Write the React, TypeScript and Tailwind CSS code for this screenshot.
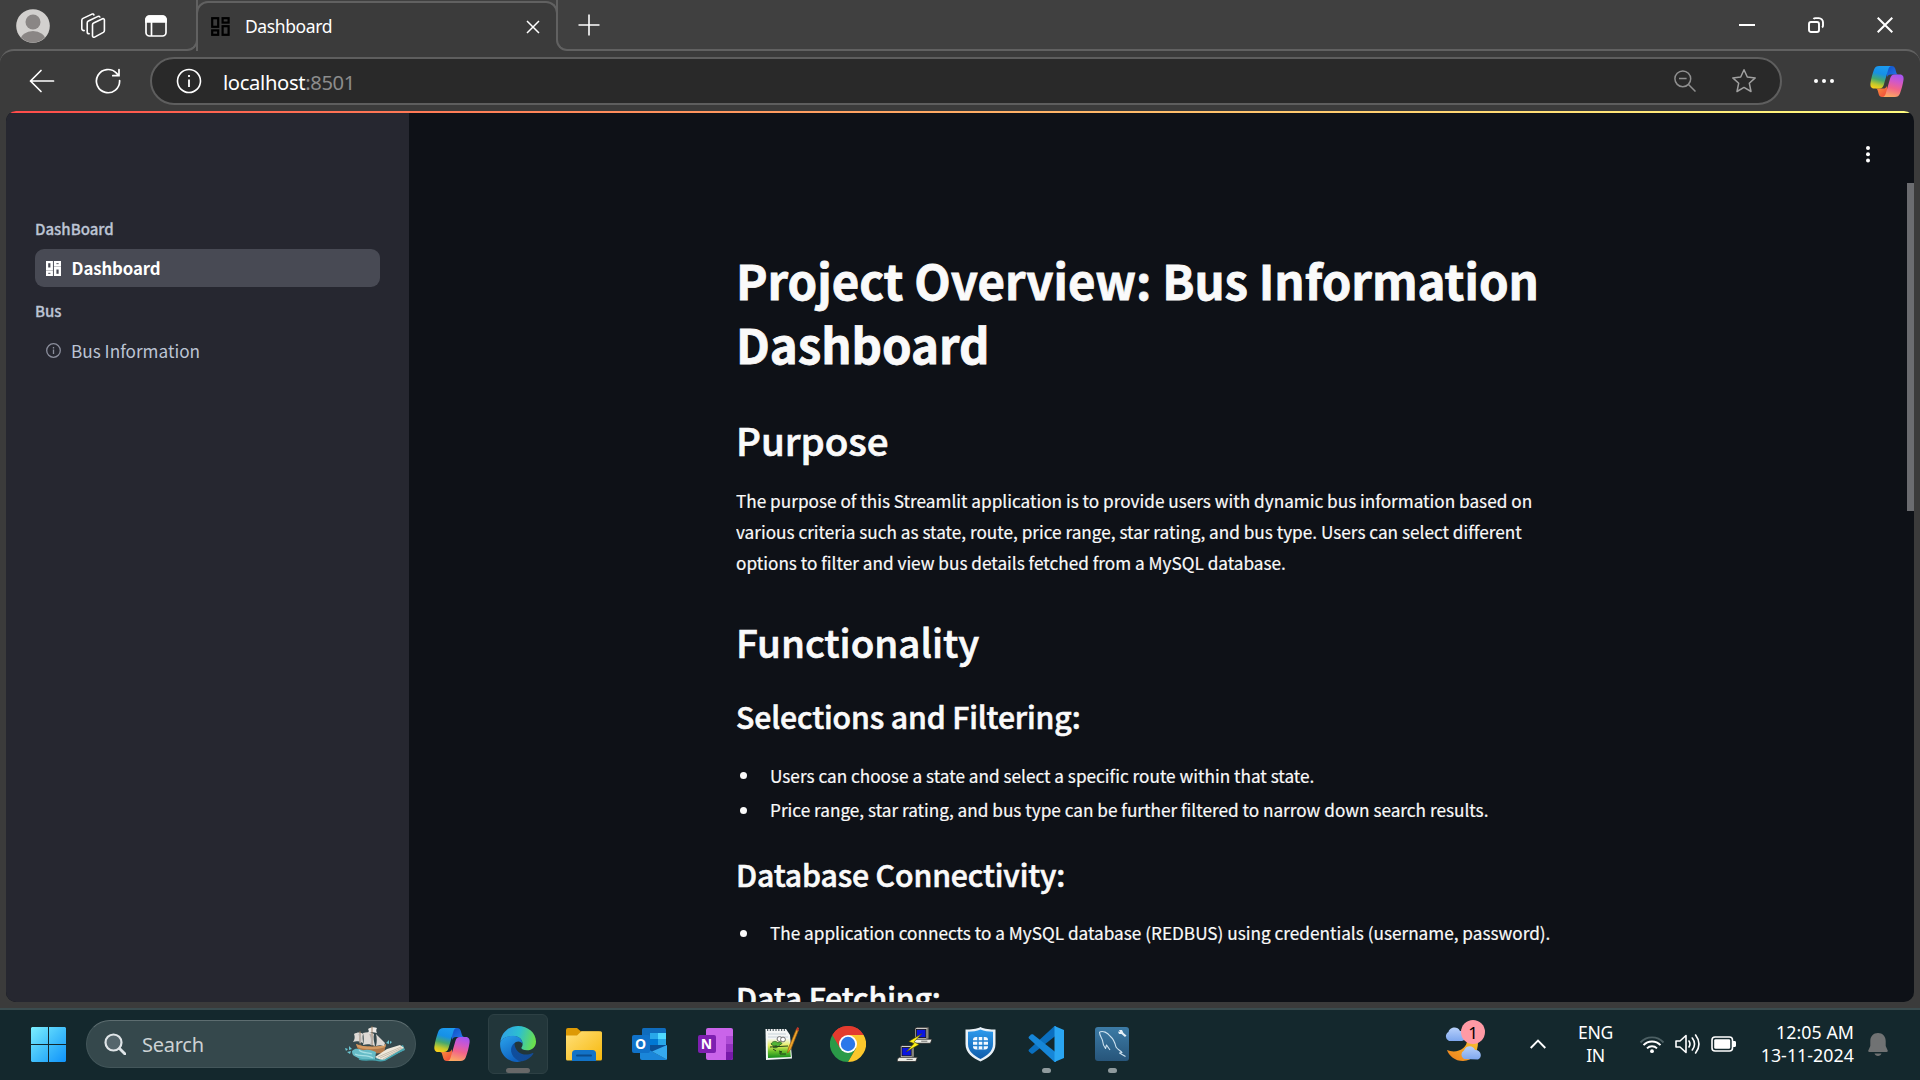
import type { ReactNode } from "react";

const UI = "font-['Noto_Sans',sans-serif]";
const PAGE = "font-['Noto_Sans_CJK_SC',sans-serif]";

/* ---------- shared icons ---------- */

function CopilotIcon({ id, className }: { id: string; className: string }) {
  return (
    <svg viewBox="0 0 36 33" className={className}>
      <defs>
        <linearGradient id={id + "a"} x1="0.6" y1="0" x2="0.35" y2="1">
          <stop offset="0" stopColor="#1c9bf0" />
          <stop offset="0.35" stopColor="#1690e6" />
          <stop offset="0.62" stopColor="#46a86e" />
          <stop offset="0.85" stopColor="#c3c92c" />
          <stop offset="1" stopColor="#f4cd1c" />
        </linearGradient>
        <linearGradient id={id + "b"} x1="0.6" y1="0" x2="0.35" y2="1">
          <stop offset="0" stopColor="#a855f0" />
          <stop offset="0.3" stopColor="#d158c8" />
          <stop offset="0.6" stopColor="#f2648a" />
          <stop offset="1" stopColor="#fbaa62" />
        </linearGradient>
        <linearGradient id={id + "c"} x1="0" y1="0" x2="1" y2="1">
          <stop offset="0" stopColor="#0f4fc4" />
          <stop offset="1" stopColor="#2a7cf0" />
        </linearGradient>
        <linearGradient id={id + "d"} x1="0" y1="0" x2="1" y2="1">
          <stop offset="0" stopColor="#fb9a3c" />
          <stop offset="1" stopColor="#f0463c" />
        </linearGradient>
      </defs>
      <path d="M18 0h5.200c2 0 3 1.200 3.600 3l1 3.600c.5 1.600 1 2.400 2.600 2.400H22c-2 0-3.400 1-4 3z" fill={`url(#${id}c)`} />
      <path d="M18 33h-5.200c-2 0-3-1.200-3.600-3l-1-3.600C7.700 24.800 7.200 24 5.600 24H14c2 0 3.400-1 4-3z" fill={`url(#${id}d)`} />
      <path d="M9.600 0H23c-2 0-3 1.400-3.600 3.400L14.600 20c-.8 2.600-2 4-4.600 4H4.200C1 24 0 21.400.4 18.400 1 14 2.600 8 4.200 3.800 5.200 1.200 6.800 0 9.600 0z" fill={`url(#${id}a)`} />
      <path d="M26.400 33H13c2 0 3-1.400 3.600-3.400L21.400 13c.8-2.600 2-4 4.600-4h5.800c3.200 0 4.200 2.600 3.800 5.600-.6 4.400-2.200 10.400-3.800 14.600-1 2.600-2.600 3.800-5.400 3.800z" fill={`url(#${id}b)`} />
    </svg>
  );
}

function GridIcon({ className, stroke }: { className: string; stroke: number }) {
  return (
    <svg viewBox="0 0 19 19" className={className} fill="none" stroke="currentColor" strokeWidth={stroke}>
      <rect x="1.200" y="1.200" width="6" height="8.600" />
      <rect x="1.200" y="13.400" width="6" height="4.400" />
      <rect x="11.600" y="1.200" width="6" height="4.400" />
      <rect x="11.600" y="9.200" width="6" height="8.600" />
    </svg>
  );
}

/* ---------- browser frame ---------- */

function TitleBar() {
  return (
    <div className="relative z-10 -mb-[2px] flex h-[51px] w-full items-start text-white">
      <div className="flex h-[51px] w-[186px] shrink-0 items-center pl-4">
        <svg viewBox="0 0 34 34" className="size-[34px]">
          <defs>
            <clipPath id="face"><circle cx="17" cy="17" r="16.500" /></clipPath>
          </defs>
          <circle cx="17" cy="17" r="16.800" fill="#d2d0ce" />
          <g clipPath="url(#face)" fill="#8a8685">
            <circle cx="17" cy="13" r="7.500" />
            <ellipse cx="17" cy="31" rx="12.500" ry="9" />
          </g>
        </svg>
        <svg viewBox="0 0 26 26" className="ml-[30px] size-[26px]" fill="none" stroke="#fff" strokeWidth="1.600" strokeLinejoin="round" strokeLinecap="round">
          <path d="M12.500 11.800c0-.8.4-1.500 1.100-1.800l9-4.200c.9-.4 1.800.2 1.800 1.100v10.600c0 .8-.4 1.500-1.100 1.900l-8.700 4.700c-1 .5-2.100-.1-2.100-1.200z" />
          <path d="M9.200 20.800c-1.300 0-2-.7-2-1.900V10c0-.9.400-1.600 1.200-2L18 3.400c.8-.3 1.500 0 1.800.6" />
          <path d="M4.200 17.600c-1.500 0-2.400-.7-2.400-2V7.400c0-.9.400-1.600 1.200-2l9-4.300c.8-.3 1.600 0 1.900.8" />
        </svg>
        <svg viewBox="0 0 22 22" className="ml-[39px] size-[22px]" fill="none" stroke="#fff" strokeWidth="1.700">
          <rect x="1" y="1" width="20" height="20" rx="3.500" />
          <path d="M1 7V4.500A3.500 3.500 0 0 1 4.500 1h13A3.500 3.500 0 0 1 21 4.500V7z" fill="#fff" />
          <path d="M6.500 7v14" />
        </svg>
      </div>
      <div className="h-[51px] w-3 shrink-0 bg-[#3b3b3b]">
        <div className="h-full w-full rounded-br-[11px] border-r-2 border-b-2 border-[#616161] bg-[#404040]" />
      </div>
      <div className="-mx-[2px] mt-[1px] flex h-[50px] w-[362px] shrink-0 items-center rounded-t-[12px] border-x-2 border-t-2 border-[#616161] bg-[#3b3b3b] pr-[16px] pb-[1px] pl-[13px]">
        <GridIcon stroke={2.2} className="size-[19px] text-black" />
        <span className={`-mt-[2px] ml-[15px] flex-1 text-[17.500px] leading-6 tracking-[-0.4px] ${UI}`}>Dashboard</span>
        <svg viewBox="0 0 14 14" className="size-[14px]" stroke="#fff" strokeWidth="1.500"><path d="M1 1l12 12M13 1L1 13" /></svg>
      </div>
      <div className="h-[51px] w-3 shrink-0 bg-[#3b3b3b]">
        <div className="h-full w-full rounded-bl-[11px] border-b-2 border-l-2 border-[#616161] bg-[#404040]" />
      </div>
      <svg viewBox="0 0 22 22" className="mt-[14px] ml-[9.500px] size-[22px]" stroke="#fff" strokeWidth="1.600"><path d="M11 .5v21M.5 11h21" /></svg>
      <div className="mt-[17px] mr-[27px] ml-auto flex items-center gap-[53px]">
        <svg viewBox="0 0 16 16" className="size-4" stroke="#fff" strokeWidth="2"><path d="M0 8h16" /></svg>
        <svg viewBox="0 0 16 16" className="size-4" fill="none" stroke="#fff" strokeWidth="1.900">
          <rect x="1" y="5" width="10" height="10" rx="2" />
          <path d="M5.500 2c.4-.6 1-.9 2-.9h3.300A4.200 4.200 0 0 1 15 5.300v3.200c0 1-.3 1.500-.9 2" />
        </svg>
        <svg viewBox="0 0 16 16" className="size-4" stroke="#fff" strokeWidth="2"><path d="M.7.7l14.600 14.600M15.300.7L.7 15.300" /></svg>
      </div>
    </div>
  );
}

function Toolbar() {
  return (
    <div className="flex h-[62px] w-full items-center rounded-t-[14px] border-t-2 border-[#616161] bg-[#3b3b3b]">
      <svg viewBox="0 0 26 24" className="ml-[29px] h-6 w-[26px]" fill="none" stroke="#fff" strokeWidth="1.700" strokeLinecap="round" strokeLinejoin="round">
        <path d="M24.500 12H1.500M12 1.500L1.500 12 12 22.500" />
      </svg>
      <svg viewBox="0 0 26 26" className="ml-[40px] size-[26px]" fill="none" stroke="#fff" strokeWidth="1.700" strokeLinecap="round">
        <path d="M24.600 12.500A11.600 11.600 0 1 1 21.500 5.200L23.600 7.500M24 1.500v6.200h-6.200" />
      </svg>
      <div className="ml-[29px] flex h-[48px] w-[1632px] items-center rounded-full border-2 border-[#5e5e5e] bg-[#292929] pl-[24px]">
        <svg viewBox="0 0 26 26" className="size-[26px]" fill="none" stroke="#fff" strokeWidth="1.600">
          <circle cx="13" cy="13" r="11.500" />
          <path d="M13 11.500v7.500M13 7v2" strokeWidth="1.800" />
        </svg>
        <span className={`mt-[1px] ml-[21px] flex-1 text-[20.200px] leading-7 tracking-[-0.35px] text-white ${UI}`}>
          localhost<span className="text-[#8c8c8c]">:8501</span>
        </span>
        <svg viewBox="0 0 22 22" className="size-[22px]" fill="none" stroke="#8f8f8f" strokeWidth="1.500">
          <circle cx="8.800" cy="8.800" r="7.900" />
          <path d="M14.500 14.500l7 7M5 8.500h7.600" />
        </svg>
        <svg viewBox="0 0 26 26" className="mr-[23px] ml-[35px] size-[26px]" fill="none" stroke="#a0a0a0" strokeWidth="1.500" strokeLinejoin="round">
          <path d="M13 1.800l3.300 7.200 7.900.9-5.900 5.300 1.700 8.300-7-4.100-7 4.100 1.700-8.300L1.800 9.900l7.900-.9z" />
        </svg>
      </div>
      <svg viewBox="0 0 20 4" className="ml-[32px] h-1 w-5" fill="#fff"><circle cx="2" cy="2" r="2" /><circle cx="10" cy="2" r="2" /><circle cx="18" cy="2" r="2" /></svg>
      <CopilotIcon id="cpt" className="ml-[36px] h-[31px] w-[34px]" />
    </div>
  );
}

/* ---------- app content ---------- */

const label = `h-6 text-[15px] font-medium leading-6 text-[#bcc4d4] [-webkit-text-stroke:0.3px_#bcc4d4] ${PAGE}`;

function Sidebar() {
  return (
    <aside className={`w-[403px] shrink-0 bg-[#262730] px-[29px] pt-[104px] ${PAGE}`}>
      <div className={label}>DashBoard</div>
      <div className="mt-[8px] flex h-[38px] items-center rounded-[9px] bg-[#484a54] pl-[11px] text-white">
        <GridIcon stroke={3.2} className="size-[15px]" />
        <span className="ml-[10.500px] text-[16.800px] leading-[38px] font-bold tracking-[-0.1px]">Dashboard</span>
      </div>
      <div className={`mt-[12px] ${label}`}>Bus</div>
      <div className="mt-[9px] flex h-[38px] items-center pl-[11px]">
        <svg viewBox="0 0 15 15" className="-mt-[1px] size-[15px]" fill="none" stroke="#8b8e9c" strokeWidth="1.300"><circle cx="7.500" cy="7.500" r="6.800" /><path d="M7.500 6.500V11M7.500 4v1.500" /></svg>
        <span className="ml-[10px] text-[17.200px] leading-[38px] text-[#bcc4d4]">Bus Information</span>
      </div>
    </aside>
  );
}

const H2 = ({ children }: { children: ReactNode }) => (
  <h2 className="text-[38.500px] leading-[52px] font-medium tracking-[-0.02px] [-webkit-text-stroke:0.7px_#fafafa]">{children}</h2>
);
const H3 = ({ children }: { children: ReactNode }) => (
  <h3 className="text-[30.200px] leading-[40px] font-medium tracking-[-0.13px] [-webkit-text-stroke:0.6px_#fafafa]">{children}</h3>
);
const BODY = "text-[17.200px] leading-[31px] tracking-[0.003px] [-webkit-text-stroke:0.2px_#fafafa]";
const Li = ({ children }: { children: ReactNode }) => (
  <li className="flex h-[31px] items-center whitespace-nowrap">
    <span className="mt-[1px] mr-[23.500px] ml-[3.500px] size-[7px] rounded-full bg-[#fafafa]" />
    <span className={BODY}>{children}</span>
  </li>
);

function Main() {
  return (
    <main className={`flex flex-1 text-[#fafafa] ${PAGE}`}>
      <article className="ml-[327px] h-[889px] w-[860px] overflow-hidden pt-[134.500px]">
        <h1 className="text-[47.400px] leading-[64px] font-bold tracking-[-0.04px] [-webkit-text-stroke:0.8px_#fafafa]">Project Overview: Bus Information<br />Dashboard</h1>
        <div className="mt-[37px]"><H2>Purpose</H2></div>
        <p className={`mt-[20.500px] whitespace-nowrap ${BODY}`}>
          The purpose of this Streamlit application is to provide users with dynamic bus information based on<br />
          various criteria such as state, route, price range, star rating, and bus type. Users can select different<br />
          options to filter and view bus details fetched from a MySQL database.
        </p>
        <div className="mt-[37px]"><H2>Functionality</H2></div>
        <div className="mt-[28.500px]"><H3>Selections and Filtering:</H3></div>
        <ul className="mt-[24px] flex flex-col gap-[3.500px]">
          <Li>Users can choose a state and select a specific route within that state.</Li>
          <Li>Price range, star rating, and bus type can be further filtered to narrow down search results.</Li>
        </ul>
        <div className="mt-[28.500px]"><H3>Database Connectivity:</H3></div>
        <ul className="mt-[23.500px]">
          <Li>The application connects to a MySQL database (REDBUS) using credentials (username, password).</Li>
        </ul>
        <div className="mt-[29px]"><H3>Data Fetching:</H3></div>
      </article>
      <div className="mr-0 ml-auto flex gap-[37px]">
        <svg viewBox="0 0 4 17" className="mt-[32.500px] h-[17px] w-1" fill="#fff"><circle cx="2" cy="2" r="2" /><circle cx="2" cy="8.300" r="2" /><circle cx="2" cy="14.600" r="2" /></svg>
        <div className="mt-[70px] h-[328px] w-[7px] bg-[#6b6c70]" />
      </div>
    </main>
  );
}

/* ---------- taskbar ---------- */

function Ship() {
  return (
    <svg viewBox="0 0 60 36" className="h-9 w-[60px]">
      <path d="M30 33l10-6 18-8 2 5-22 10z" fill="#4fa9b5" />
      <path d="M11 18c6 3 24 4 30 0l-2 9-22 1c-3-2-5-6-6-10z" fill="#b0794a" />
      <path d="M11 18c6 3 24 4 30 0l-.6 3c-8 3-22 3-28 0z" fill="#d39a62" />
      <path d="M9 8c3-2 7-2 9 0-1 3 0 6 0 9-4-2-7-2-10-1 2-3 2-5 1-8zM18 7c4-1 8-1 11 1-1 4 0 7 1 12-5-2-8-2-12-1 1-4 1-8 0-12zM31 8l9 9-1 3c-3-1-5-1-8 0 1-4 1-8 0-12z" fill="#dedad5" />
      <path d="M23 3c3-2 6-2 9-1-1 2-1 3 0 5-3-1-6-1-9 0 1-1 1-3 0-4z" fill="#efece8" />
      <path d="M15 5v14M27 0v20" stroke="#8e6a4a" strokeWidth=".8" />
      <path d="M14 8c2 3 2 6 1 9M25 8c2 4 2 8 1 11" stroke="#b3afab" strokeWidth="1.500" fill="none" />
      <path d="M7 25c5-5 9 0 13-1s8 1 11 2l-1 8c-6-1-12 1-17-2-3-2-6-2-6-7z" fill="#66bcc7" />
      <path d="M10 28c5 3 12 0 18 4M14 24c4 4 9 2 13 4" stroke="#a5dfe4" strokeWidth="1.200" fill="none" />
      <path d="M0 22l3 1-2 2zM4 20l3 3-3 1zM2 26l4-1-1 3zM41 17l3-3v4zM45 15l2 1-2 2z" fill="#6cc7d3" />
      <path d="M30 31l12-8 13-4 4 3-19 12c-4 0-7-1-10-3z" fill="#efe9dc" />
      <path d="M33 31l23-10M35 32l22-10M38 33l21-11" stroke="#b5ab9a" strokeWidth=".7" />
      <path d="M14 33c6 2 12 0 17 1 3 1 6 1 9 0l19-11" stroke="#46a3ae" strokeWidth="1.500" fill="none" />
    </svg>
  );
}

function EdgeIcon() {
  return (
    <svg viewBox="0 0 36 36" className="size-9">
      <defs>
        <linearGradient id="e1" x1="0" y1="0.300" x2="1" y2="0.500"><stop offset="0" stopColor="#2f9fe8" /><stop offset=".5" stopColor="#2dbfd0" /><stop offset="1" stopColor="#6be04a" /></linearGradient>
        <linearGradient id="e2" x1="0" y1="0" x2="0.500" y2="1"><stop offset="0" stopColor="#2aa3ec" /><stop offset="1" stopColor="#0f62c0" /></linearGradient>
        <linearGradient id="e3" x1="0" y1="0" x2="1" y2="1"><stop offset="0" stopColor="#0c4fa0" /><stop offset="1" stopColor="#144a94" /></linearGradient>
      </defs>
      <path d="M.3 16C1.500 6.500 9 0 18 0c10 0 18 7 18 15.500 0 5.500-4 8.800-9 8.800-4 0-6.200-1.400-5.500-2.800 3-4 0-11.500-8-11.500C7 10 2 12.500.3 16z" fill="url(#e1)" />
      <path d="M.2 16.500C1.800 12.300 7 9.800 13 9.800c6.500 0 9.800 4.400 9.500 8.400-1-3-6-4-8.500-.5-3.500 5-.5 13.500 8 16.800-1 .8-3 1.500-5 1.400C6.500 35.500-.8 27 .2 16.500z" fill="url(#e2)" />
      <path d="M14.500 17c-5.500 4-4.500 13 3.500 17.500 1.500.8 3 1 4.200.8 5-1.200 8.600-3.900 11-7.300.5-.8-.3-1.200-1-.8-3 1.400-7 2-10.700.5-4.500-1.800-7-6-7-10.700z" fill="url(#e3)" />
    </svg>
  );
}

function FolderIcon() {
  return (
    <svg viewBox="0 0 36 33" className="h-[33px] w-9">
      <defs><linearGradient id="fo" x1="0" y1="0" x2="1" y2="1"><stop offset="0" stopColor="#ffe07a" /><stop offset="1" stopColor="#f7b80c" /></linearGradient></defs>
      <path d="M0 2a2 2 0 0 1 2-2h9l4 3.500h19L18 9H0z" fill="#dd9a05" />
      <path d="M0 7.500h11l4.500-4.300H34.500A1.500 1.500 0 0 1 36 4.700V31a1.500 1.500 0 0 1-1.500 1.500h-33A1.500 1.500 0 0 1 0 31z" fill="url(#fo)" />
      <path d="M6 33v-7.500a3.500 3.500 0 0 1 3.500-3.500h17a3.500 3.500 0 0 1 3.500 3.500V33z" fill="#1273c8" />
      <path d="M11 27.500h14" stroke="#0a4c8c" strokeWidth="2" strokeLinecap="round" />
    </svg>
  );
}

function LetterTile({ letter, className }: { letter: string; className: string }) {
  return (
    <span className={`absolute top-[7px] left-0 flex size-[18px] items-center justify-center rounded-[2px] font-['Open_Sans',sans-serif] text-[14px] leading-none font-bold text-white ${className}`}>{letter}</span>
  );
}

function OutlookIcon() {
  return (
    <span className="relative block h-8 w-[35px]">
      <svg viewBox="0 0 35 32" className="h-8 w-[35px]">
        <rect x="10" width="24" height="22" rx="1.500" fill="#0f6cbd" />
        <rect x="18" y="5" width="8" height="6" fill="#28a8ea" /><rect x="26" y="5" width="8" height="6" fill="#50d9ff" />
        <rect x="18" y="11" width="8" height="6" fill="#0078d4" /><rect x="26" y="11" width="8" height="6" fill="#28a8ea" />
        <rect x="10" y="17" width="24" height="7" fill="#0a4f96" />
        <path d="M8 17l27 14.500a1.500 1.500 0 0 1-1 .5H10a2 2 0 0 1-2-2z" fill="#1a86d9" />
        <path d="M35 17v13.500c0 .5 0 .8-.3 1L20 23.500z" fill="#35a9ee" />
      </svg>
      <LetterTile letter="O" className="bg-[#1072c9]" />
    </span>
  );
}

function OneNoteIcon() {
  return (
    <span className="relative block h-8 w-[35px]">
      <svg viewBox="0 0 35 32" className="h-8 w-[35px]">
        <rect x="8" width="27" height="32" rx="2" fill="#ca64ea" />
        <path d="M28 8h7v8h-7z" fill="#ae4bd5" /><path d="M28 16h7v8h-7z" fill="#9332bf" /><path d="M28 24h7v6a2 2 0 0 1-2 2h-5z" fill="#7719aa" />
      </svg>
      <LetterTile letter="N" className="bg-[#7e1fb0]" />
    </span>
  );
}

function NotepadIcon() {
  return (
    <svg viewBox="0 0 34 34" className="size-[34px]">
      <defs><linearGradient id="np" x1="0" y1="0" x2="0" y2="1"><stop offset="0" stopColor="#f4f7e8" /><stop offset=".35" stopColor="#e6ef60" /><stop offset=".65" stopColor="#6cc22c" /><stop offset="1" stopColor="#128a1c" /></linearGradient></defs>
      <path d="M.5 2H21l4 6 2 23.500L1 33z" fill="#f4f6f6" />
      <path d="M2 3h18" stroke="#58646a" strokeWidth="2" strokeDasharray="1.200 1.600" />
      <path d="M3 7h18M3 10h20" stroke="#c6d2d8" strokeWidth="1" />
      <path d="M2.500 12h22l1.300 18L3 31z" fill="url(#np)" />
      <path d="M6 17c1.500-3 5-3.500 7-1l2-1.500 2 2-3 2c-1.500 2.500-4 3-6 1.500 2 0 3-.5 3.500-1.500-2.500.500-4.500 0-5.500-1.500z" fill="#52b436" stroke="#255c1e" strokeWidth=".8" />
      <path d="M5 20l18-1M8 22l3 2M14 24l3 1h-2v2h6" stroke="#24421c" strokeWidth="1" fill="none" />
      <circle cx="14.500" cy="12" r="2.400" fill="#fff" stroke="#555" strokeWidth=".8" /><circle cx="18" cy="12.500" r="2.400" fill="#fff" stroke="#555" strokeWidth=".8" />
      <path d="M22.500 26l1-5L31.500 2l2 1L26 22z" fill="#eea62a" stroke="#9a5a14" strokeWidth=".7" />
      <path d="M31 3l1.200-3 2 1-1 3z" fill="#c0392b" />
    </svg>
  );
}

function ChromeIcon() {
  return (
    <svg viewBox="0 0 36 36" className="size-9">
      <path d="M2.400 9A18 18 0 0 1 33.600 9H18z" fill="#e33b2e" />
      <path d="M18 18L2.400 9A18 18 0 0 0 18 36l7.800-13.500z" fill="#2a9a48" />
      <path d="M18 9h15.600A18 18 0 0 1 18 36l7.800-13.500z" fill="#fcc72c" />
      <path d="M2.400 9l7.800 13.500L18 9h15.600A18 18 0 0 0 2.400 9z" fill="#e33b2e" />
      <circle cx="18" cy="18" r="9" fill="#fff" />
      <circle cx="18" cy="18" r="7.200" fill="#2b78ea" />
    </svg>
  );
}

function PuttyIcon() {
  const pc = (x: number, y: number) => (
    <g transform={`translate(${x} ${y})`}>
      <path d="M3 1L5 0h11v11l-2 1H3z" fill="#d8d8d2" stroke="#222" strokeWidth=".8" />
      <path d="M14 1.500L16 0v11l-2 1z" fill="#86867e" />
      <rect x="4.500" y="2" width="9" height="8" fill="#0a16e0" stroke="#111" strokeWidth=".8" />
      <path d="M0 13l2-1.500h17.500L18 15.500H0z" fill="#ecece6" stroke="#222" strokeWidth=".7" />
      <path d="M9 13.500h6" stroke="#555" strokeWidth=".8" />
    </g>
  );
  return (
    <svg viewBox="0 0 34 34" className="size-[35px]">
      {pc(14.5, 0.3)}
      {pc(0.3, 18)}
      <path d="M24 6.500L11.500 14l5 2-7.500 8 12.500-7-5-2.500z" fill="#fff21a" stroke="#4a4600" strokeWidth=".6" />
    </svg>
  );
}

function ShieldIcon() {
  return (
    <svg viewBox="0 0 31 35" className="h-[35px] w-[31px]">
      <defs><linearGradient id="sh" x1="0" y1="0" x2="0" y2="1"><stop offset="0" stopColor="#2d9bee" /><stop offset="1" stopColor="#0f5cab" /></linearGradient></defs>
      <path d="M15.500 0C19 2 26 2.500 30.500 2.500V17c0 9-7 14-15 17.500C7.500 31 .5 26 .5 17V2.500C5 2.500 12 2 15.500 0z" fill="#e9f1f7" />
      <path d="M15.500 2.500c3.500 1.500 8 2.200 12.500 2.300V17c0 7.500-6 11.800-12.500 15C9 28.800 3 24.500 3 17V4.800c4.500-.1 9-.8 12.500-2.300z" fill="url(#sh)" />
      <rect x="8" y="10" width="15" height="12.500" rx="3" fill="#f4faff" />
      <path d="M13 10v12.500M18 10v12.500M8 14h15M8 18.500h15" stroke="#1f7fd0" strokeWidth="1.400" />
    </svg>
  );
}

function CodeIcon() {
  return (
    <svg viewBox="0 0 36 36" className="size-9">
      <path d="M26.500 0L1 23.400c-.6.6-.6 1.400 0 2l2.200 2c.6.5 1.300.5 1.900.1L28 9.500V0z" fill="#0a6fbf" />
      <path d="M26.500 36L1 12.600c-.6-.6-.6-1.400 0-2l2.200-2c.6-.5 1.300-.5 1.900-.1L28 26.500V36z" fill="#1686d8" />
      <path d="M26.500 0L36 4v28l-9.500 4z" fill="#2aa6f2" />
    </svg>
  );
}

function MySqlIcon() {
  return (
    <svg viewBox="0 0 34 34" className="size-[34px]">
      <defs><linearGradient id="my" x1="0" y1="0" x2="0" y2="1"><stop offset="0" stopColor="#3c7ba6" /><stop offset="1" stopColor="#27557a" /></linearGradient></defs>
      <rect width="34" height="34" rx="3" fill="url(#my)" />
      <path d="M4.500 5c3.500-1.500 8 .5 10.500 4 3.500 3 5 6.500 6 11 1.500 2.500 4.500 3.500 6 5.500l-2.500.500 6 3.500M4.500 5c0 3.500 2 5.500 3 8.500.300 3 .8 5.500 3 8l1-3.500 3.500 5" fill="none" stroke="#cfe3f0" strokeWidth="1.100" strokeLinejoin="round" />
      <path d="M24 3l3 0 1.500 3 3 2.500-1.500 1.500-3.500-3h-2.500l-1-2.500 2 .5z" fill="#e6f0f7" />
    </svg>
  );
}

function Slot({ children, dot }: { children: ReactNode; dot?: boolean }) {
  return (
    <div className="relative flex h-[72px] w-[66px] shrink-0 items-center justify-center">
      {children}
      {dot && <span className="absolute bottom-[7px] left-[28.500px] h-[5px] w-[9px] rounded-full bg-[#8f9a9d]" />}
    </div>
  );
}

function Weather() {
  return (
    <div className="relative h-[44px] w-[44px]">
      <svg viewBox="0 0 44 44" className="size-11">
        <defs>
          <linearGradient id="cl" x1="0" y1="0" x2="0" y2="1"><stop offset="0" stopColor="#b7d0fb" /><stop offset="1" stopColor="#7ea7ee" /></linearGradient>
          <linearGradient id="mo" x1="0" y1="1" x2="1" y2="0"><stop offset="0" stopColor="#ee7d1c" /><stop offset="1" stopColor="#f8c531" /></linearGradient>
        </defs>
        <path d="M3 31c9 4 21-1 20-11 6-1 13 0 11 3 0 10-5 19-15 19C11 42 5 37 3 31z" fill="url(#mo)" />
        <path d="M5 22a5 5 0 0 1-.5-9C5 9 13 6 16 12c5-1 8 9 2 10z" fill="url(#cl)" />
        <path d="M20 40a4.800 4.800 0 0 1 0-8.500c1.500-5 9-6 11-.5 6-.5 8 7.500 3 9.500z" fill="url(#cl)" />
      </svg>
      <span className={`absolute top-[1px] left-[17px] flex size-6 items-center justify-center rounded-full bg-[#ff9aa5] text-[17px] leading-none text-black ${UI}`}>1</span>
    </div>
  );
}

function Taskbar() {
  return (
    <footer className={`h-[72px] w-full border-t-2 border-[#3a4c4f] bg-[#14282d] ${UI}`}>
      <div className="-mt-[2px] flex h-[72px] items-center">
        <div className="flex h-[72px] shrink-0 items-center pl-[31px]">
          <svg viewBox="0 0 35 35" className="size-[35px]">
            <defs><linearGradient id="win" gradientUnits="userSpaceOnUse" x1="0" y1="0" x2="35" y2="35"><stop offset="0" stopColor="#7cf0ff" /><stop offset=".5" stopColor="#42c0fb" /><stop offset="1" stopColor="#0f93fb" /></linearGradient></defs>
            <path d="M1 0h16v17H0V1zM18 0h16l1 1v16H18zM0 18h17v17H1l-1-1zM18 18h17v16l-1 1H18z" fill="url(#win)" />
          </svg>
          <div className="ml-5 flex h-[48px] w-[330px] items-center rounded-full border border-[#43565a] border-t-[#5d6d70] bg-[#35484c] pl-[17px]">
            <svg viewBox="0 0 22 22" className="size-[22px]" fill="none" stroke="#e0e5e8" strokeWidth="2.200"><circle cx="9.500" cy="9.500" r="8" fill="#55666c" /><path d="M15.500 15.500l5.500 5.500" strokeWidth="2.800" strokeLinecap="round" /></svg>
            <span className="mt-[1px] ml-[16px] flex-1 text-[20px] leading-7 tracking-[-0.25px] text-[#ccd2d4]">Search</span>
            <div className="mr-[10px]"><Ship /></div>
          </div>
        </div>
        <div className="ml-[3px] flex">
          <Slot><CopilotIcon id="cpb" className="h-[33px] w-9" /></Slot>
          <Slot>
            <div className="relative flex size-[60px] items-center justify-center rounded-[6px] border border-[#2d4044] bg-[#22363a]">
              <EdgeIcon />
              <span className="absolute bottom-0 left-[17px] h-[5px] w-6 rounded-full bg-[#686868]" />
            </div>
          </Slot>
          <Slot><FolderIcon /></Slot>
          <Slot><span className="-ml-[2px]"><OutlookIcon /></span></Slot>
          <Slot><span className="-ml-[2px]"><OneNoteIcon /></span></Slot>
          <Slot><NotepadIcon /></Slot>
          <Slot><ChromeIcon /></Slot>
          <Slot><PuttyIcon /></Slot>
          <Slot><ShieldIcon /></Slot>
          <Slot dot><CodeIcon /></Slot>
          <Slot dot><MySqlIcon /></Slot>
        </div>
        <div className="ml-auto flex items-center pr-[32px] text-[17.600px] leading-[23px] text-white">
          <div className="-mt-[6px]"><Weather /></div>
          <svg viewBox="0 0 16 10" className="ml-[42px] h-[10px] w-4" fill="none" stroke="#fff" strokeWidth="1.900"><path d="M.7 9L8 1.700 15.300 9" /></svg>
          <div className="ml-[31px] w-[37px] text-center tracking-[-0.4px]">ENG<br />IN</div>
          <svg viewBox="0 0 26 20" className="ml-[25px] h-5 w-[26px]" fill="none" stroke="#fff" strokeWidth="1.900">
            <path d="M1.500 8.500a15.500 15.500 0 0 1 23 0" stroke="#4c5f63" />
            <path d="M4.500 11.200a11.500 11.500 0 0 1 17 0M8 14.300a7 7 0 0 1 10 0" />
            <circle cx="13" cy="17.200" r="1.900" fill="#fff" stroke="none" />
          </svg>
          <svg viewBox="0 0 26 22" className="ml-[10px] h-[22px] w-[26px]" fill="none" stroke="#fff" strokeWidth="1.600" strokeLinejoin="round" strokeLinecap="round">
            <path d="M1 8v6h4l6 5.500v-17L5 8zM14 8c1.300 2 1.300 4 0 6M17.300 5c3 4 3 8 0 12M20.600 2c4.500 6 4.500 12 0 18" />
          </svg>
          <svg viewBox="0 0 26 16" className="ml-[10px] h-4 w-[26px]">
            <rect x="1" y="1" width="20.500" height="14" rx="3" fill="none" stroke="#fff" strokeWidth="1.600" />
            <rect x="3.200" y="3.200" width="16" height="9.600" rx="1.400" fill="#fff" />
            <path d="M22 5h1.500c1 0 1.500.7 1.500 1.500v3c0 .8-.5 1.500-1.500 1.500H22z" fill="#fff" />
          </svg>
          <div className="ml-[19px] w-[98px] text-right text-[17.800px] tracking-[0.05px]">12:05 AM<br />13-11-2024</div>
          <svg viewBox="0 0 20 23" className="ml-[14px] h-[23px] w-5" fill="#707273">
            <path d="M10 0c-4.600 0-7.700 3.300-7.700 8v5L.3 17.500c-.3.700.1 1.500 1 1.500h17.400c.9 0 1.300-.8 1-1.500l-2-4.500V8c0-4.700-3.100-8-7.700-8zM6.500 20.500h7c-.5 1.500-1.700 2.500-3.500 2.500s-3-1-3.500-2.500z" />
          </svg>
        </div>
      </div>
    </footer>
  );
}

export default function App() {
  return (
    <div className="flex h-[1080px] w-[1920px] flex-col overflow-hidden bg-[#404040]">
      <TitleBar />
      <Toolbar />
      <div className="h-[897px] w-full bg-[#3b3b3b] px-[6px] pb-[6px]">
        <div className="flex h-[891px] flex-col overflow-hidden rounded-[10px] bg-[#0e1117]">
          <div className="h-[2px] w-full shrink-0 bg-linear-to-r from-[#ff4b4b] to-[#fffd80]" />
          <div className="flex min-h-0 flex-1">
            <Sidebar />
            <Main />
          </div>
        </div>
      </div>
      <Taskbar />
    </div>
  );
}
